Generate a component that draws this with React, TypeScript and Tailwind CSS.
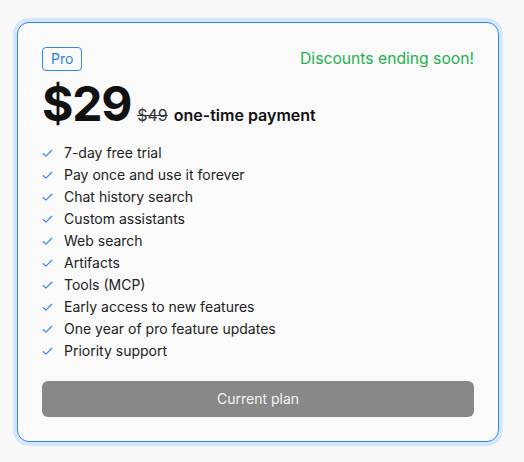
import { Check } from "lucide-react";

const features = [
  "7-day free trial",
  "Pay once and use it forever",
  "Chat history search",
  "Custom assistants",
  "Web search",
  "Artifacts",
  "Tools (MCP)",
  "Early access to new features",
  "One year of pro feature updates",
  "Priority support",
];

export default function App() {
  return (
    <div
      className="min-h-[462px] w-full bg-[#f8f8f8] pl-[17px] pt-[22px]"
      style={{ fontFamily: "Inter, 'Noto Sans', sans-serif" }}
    >
      <div className="flex h-[420px] w-[482px] flex-col rounded-xl border border-[#2f86f0] bg-[#fafafa] p-6 ring-4 ring-[#d5e7fc]">
        <div className="flex items-center justify-between">
          <span className="rounded-[4px] border border-[#2f86f0] px-2 text-sm leading-[22px] text-[#2a7fe6]">
            Pro
          </span>
          <span className="text-[15.7px] text-[#22b14c]">Discounts ending soon!</span>
        </div>
        <div className="mt-[9px] flex items-baseline gap-1.5">
          <span className="text-5xl font-bold leading-none tracking-tight text-[#111]">$29</span>
          <span className="text-base text-[#333] line-through">$49</span>
          <span className="text-base font-semibold text-[#111]">one-time payment</span>
        </div>
        <ul className="mt-[14px] flex flex-col">
          {features.map((f) => (
            <li key={f} className="flex items-center gap-2.5 text-sm leading-[22px] text-[#222]">
              <Check size={13} strokeWidth={2} className="-ml-px text-[#2f86f0]" />
              {f}
            </li>
          ))}
        </ul>
        <button className="mt-auto h-9 w-full rounded-md bg-[#888888] text-sm text-[#f3f3f3]">
          Current plan
        </button>
      </div>
    </div>
  );
}
